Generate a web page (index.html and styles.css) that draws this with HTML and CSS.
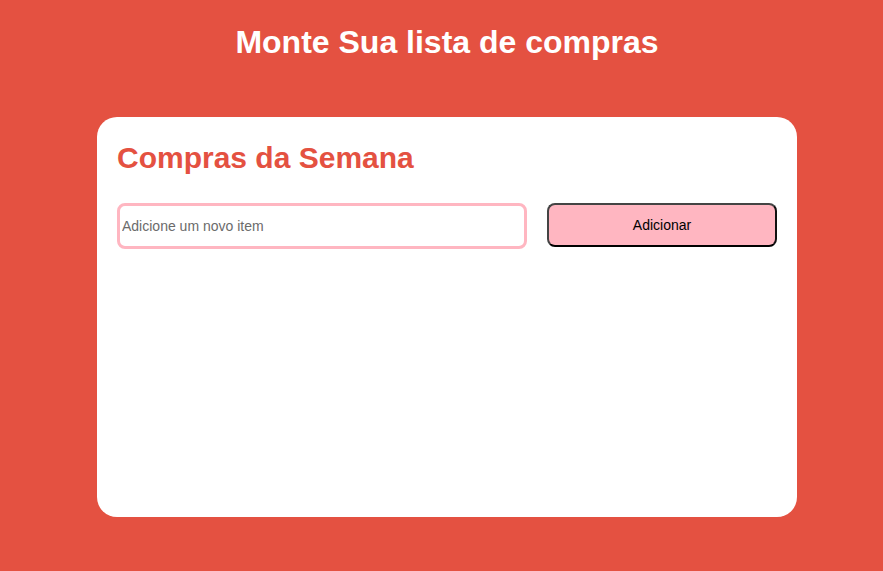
FILE: index.html
```html
<!DOCTYPE html>
<html lang="pt-BR">
<head>
<meta charset="utf-8">
<title>Lista de compras</title>
<link rel="stylesheet" href="styles.css">
</head>
<body>
  <h1 class="page-title">Monte Sua lista de compras</h1>
  <main class="card">
    <h2 class="card-title">Compras da Semana</h2>
    <form class="add-form">
      <input class="item-input" type="text" placeholder="Adicione um novo item">
      <button class="add-button" type="button">Adicionar</button>
    </form>
  </main>
</body>
</html>
```
FILE: styles.css
```css
html, body {
  margin: 0;
  height: 100%;
}
body {
  background: #e45141;
  font-family: "Liberation Sans", Arial, sans-serif;
  padding: 0 0 0 11px;
  box-sizing: border-box;
  overflow: hidden;
}
.page-title {
  margin: 24px 0 56px;
  text-align: center;
  color: #ffffff;
  font-size: 32px;
  font-weight: bold;
}
.card {
  width: 700px;
  height: 400px;
  margin: 0 auto;
  background: #ffffff;
  border-radius: 20px;
  padding: 20px;
  box-sizing: border-box;
}
.card-title {
  margin: 4px 0 28px;
  color: #e45141;
  font-size: 30px;
  font-weight: bold;
}
.add-form {
  display: flex;
  align-items: flex-start;
  gap: 20px;
}
.item-input {
  width: 410px;
  height: 46px;
  box-sizing: border-box;
  border: 3px solid #ffb6c1;
  border-radius: 8px;
  padding: 0 2px;
  font-family: "Liberation Sans", Arial, sans-serif;
  font-size: 14px;
  color: #333;
  outline: none;
}
.item-input::placeholder {
  color: #6b6b6b;
}
.add-button {
  width: 230px;
  height: 44px;
  box-sizing: border-box;
  background: #ffb6c1;
  border: 2px solid #444;
  border-bottom-color: #000;
  border-right-color: #111;
  border-radius: 8px;
  font-family: "Liberation Sans", Arial, sans-serif;
  font-size: 14px;
  color: #000;
  cursor: pointer;
}
```
